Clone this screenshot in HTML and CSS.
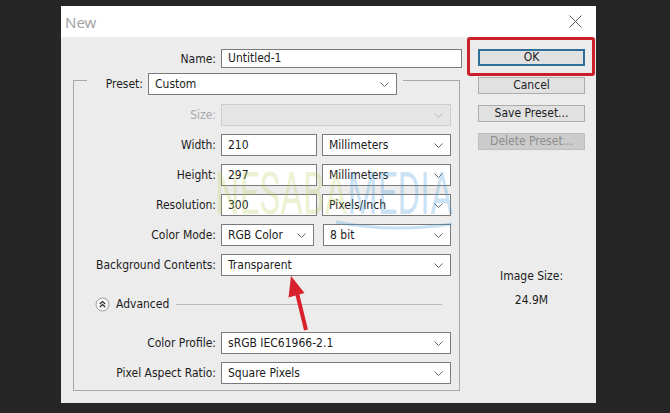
FILE: index.html
```html
<!DOCTYPE html>
<html lang="en">

<head>
    <meta charset="UTF-8">
    <meta name="viewport" content="width=device-width, initial-scale=1.0">
    <title>New</title>
    <link rel="stylesheet" href="styles.css">
</head>

<body>
    <!-- New document dialog -->
    <div class="dialog">
        <div class="titlebar">
            <span class="title">New</span>
            <svg class="close" viewBox="0 0 13 13" width="13" height="13">
                <path d="M0.5 0.5 L12.5 12.5 M12.5 0.5 L0.5 12.5" />
            </svg>
        </div>

        <div class="dialog-body">
            <!-- Left side: form -->
            <div class="main">
                <div class="name-row">
                    <label class="label name-label">Name:</label>
                    <div class="field name-field">Untitled-1</div>
                </div>

                <div class="group">
                    <div class="legend">
                        <label class="label preset-label">Preset:</label>
                        <div class="select preset-select">
                            <span>Custom</span>
                            <svg class="chev" viewBox="0 0 9 5" width="9" height="5"><path d="M0.5 0.5 L4.5 4.5 L8.5 0.5" /></svg>
                        </div>
                    </div>

                    <div class="rows top-rows">
                        <div class="row">
                            <label class="label disabled-label">Size:</label>
                            <div class="select disabled-select">
                                <span></span>
                                <svg class="chev" viewBox="0 0 9 5" width="9" height="5"><path d="M0.5 0.5 L4.5 4.5 L8.5 0.5" /></svg>
                            </div>
                        </div>
                        <div class="row">
                            <label class="label">Width:</label>
                            <div class="pair">
                                <div class="field num-field">210</div>
                                <div class="select unit-select">
                                    <span>Millimeters</span>
                                    <svg class="chev" viewBox="0 0 9 5" width="9" height="5"><path d="M0.5 0.5 L4.5 4.5 L8.5 0.5" /></svg>
                                </div>
                            </div>
                        </div>
                        <div class="row">
                            <label class="label">Height:</label>
                            <div class="pair">
                                <div class="field num-field">297</div>
                                <div class="select unit-select">
                                    <span>Millimeters</span>
                                    <svg class="chev" viewBox="0 0 9 5" width="9" height="5"><path d="M0.5 0.5 L4.5 4.5 L8.5 0.5" /></svg>
                                </div>
                            </div>
                        </div>
                        <div class="row">
                            <label class="label">Resolution:</label>
                            <div class="pair">
                                <div class="field num-field">300</div>
                                <div class="select unit-select">
                                    <span>Pixels/Inch</span>
                                    <svg class="chev" viewBox="0 0 9 5" width="9" height="5"><path d="M0.5 0.5 L4.5 4.5 L8.5 0.5" /></svg>
                                </div>
                            </div>
                        </div>
                        <div class="row">
                            <label class="label">Color Mode:</label>
                            <div class="pair mode-pair">
                                <div class="select mode-select">
                                    <span>RGB Color</span>
                                    <svg class="chev" viewBox="0 0 9 5" width="9" height="5"><path d="M0.5 0.5 L4.5 4.5 L8.5 0.5" /></svg>
                                </div>
                                <div class="select bit-select">
                                    <span>8 bit</span>
                                    <svg class="chev" viewBox="0 0 9 5" width="9" height="5"><path d="M0.5 0.5 L4.5 4.5 L8.5 0.5" /></svg>
                                </div>
                            </div>
                        </div>
                        <div class="row">
                            <label class="label">Background Contents:</label>
                            <div class="select">
                                <span>Transparent</span>
                                <svg class="chev" viewBox="0 0 9 5" width="9" height="5"><path d="M0.5 0.5 L4.5 4.5 L8.5 0.5" /></svg>
                            </div>
                        </div>
                    </div>

                    <!-- Advanced toggle -->
                    <div class="advanced">
                        <svg class="adv-icon" viewBox="0 0 15 15" width="15" height="15">
                            <circle cx="7.5" cy="7.5" r="6.5" />
                            <path d="M4.8 7 L7.5 4.6 L10.2 7 M4.8 10 L7.5 7.6 L10.2 10" />
                        </svg>
                        <span class="adv-text">Advanced</span>
                        <span class="adv-line"></span>
                    </div>

                    <div class="rows bottom-rows">
                        <div class="row">
                            <label class="label">Color Profile:</label>
                            <div class="select">
                                <span>sRGB IEC61966-2.1</span>
                                <svg class="chev" viewBox="0 0 9 5" width="9" height="5"><path d="M0.5 0.5 L4.5 4.5 L8.5 0.5" /></svg>
                            </div>
                        </div>
                        <div class="row">
                            <label class="label">Pixel Aspect Ratio:</label>
                            <div class="select">
                                <span>Square Pixels</span>
                                <svg class="chev" viewBox="0 0 9 5" width="9" height="5"><path d="M0.5 0.5 L4.5 4.5 L8.5 0.5" /></svg>
                            </div>
                        </div>
                    </div>
                </div>
            </div>

            <!-- Right side: buttons -->
            <div class="side">
                <div class="btn ok-btn">OK</div>
                <div class="btn">Cancel</div>
                <div class="btn">Save Preset...</div>
                <div class="btn disabled-btn">Delete Preset...</div>
                <div class="image-size">
                    <div>Image Size:</div>
                    <div>24.9M</div>
                </div>
                <div class="highlight"></div>
            </div>
        </div>
    </div>

    <!-- Watermark over the dialog -->
    <div class="watermark"><span class="wm-green">NESABA</span><span class="wm-blue">MEDIA</span></div>
    <svg class="swoosh" viewBox="0 0 670 413" width="670" height="413">
        <path d="M336 222 Q392 233 452 224" />
    </svg>

    <!-- Red pointer arrow -->
    <svg class="arrow" viewBox="0 0 670 413" width="670" height="413">
        <line x1="306" y1="330" x2="297" y2="293" />
        <polygon points="291,276 304.5,293 288.5,297.5" />
    </svg>
</body>

</html>
```

FILE: styles.css
```css
body {
    margin: 0;
    width: 670px;
    height: 413px;
    overflow: hidden;
    position: relative;
    background-color: #262626;
    font-family: "DejaVu Sans Condensed", "DejaVu Sans", sans-serif;
    font-size: 12px;
    color: #1c1c1c;
}

/* Dialog window */
.dialog {
    margin: 6px 0 0 61px;
    width: 535px;
    height: 397px;
    background-color: #ececec;
    display: flex;
    flex-direction: column;
}

.titlebar {
    height: 31px;
    background-color: #fff;
    display: flex;
    align-items: center;
    justify-content: space-between;
    padding: 0 14px 0 4px;
}

.title {
    font-family: "Noto Sans", sans-serif;
    font-size: 15px;
    color: #a3a3a3;
}

.close path {
    stroke: #5a5a5a;
    stroke-width: 1;
    fill: none;
}

.dialog-body {
    display: flex;
    padding-top: 12px;
}

/* Form column */
.main {
    padding-left: 12px;
    width: 389px;
}

.label {
    text-align: right;
    white-space: nowrap;
}

.name-row {
    display: flex;
    align-items: center;
    gap: 5px;
}

.name-label {
    width: 143px;
}

.field,
.select {
    box-sizing: border-box;
    height: 22px;
    border: 1px solid #7a7a7a;
    background-color: #fff;
    padding-left: 6px;
    line-height: 20px;
    white-space: nowrap;
}

.name-field {
    width: 241px;
    height: 19px;
    line-height: 17px;
}

.select {
    display: flex;
    align-items: center;
    justify-content: space-between;
    padding-right: 7px;
}

.chev path {
    stroke: #666;
    stroke-width: 1;
    fill: none;
}

/* Group box with preset legend */
.group {
    box-sizing: border-box;
    width: 387px;
    margin-top: 12px;
    border: 1px solid #a8a8a8;
    padding-bottom: 6px;
}

.legend {
    display: flex;
    align-items: center;
    gap: 5px;
    width: fit-content;
    margin: -8px 0 0 13px;
    padding: 0 6px 0 4px;
    background-color: #ececec;
}

.preset-label {
    width: 52px;
}

.preset-select {
    width: 249px;
}

.rows {
    display: flex;
    flex-direction: column;
    gap: 8px;
}

.top-rows {
    margin-top: 9px;
}

.bottom-rows {
    margin-top: 17px;
}

.row {
    display: grid;
    grid-template-columns: 142px 230px;
    column-gap: 5px;
    align-items: center;
}

.disabled-label {
    color: #a9a9a9;
}

.disabled-select {
    background-color: #e5e5e5;
    border-color: #cdcdcd;
}

.disabled-select .chev path {
    stroke: #b4b4b4;
}

.pair {
    display: flex;
    gap: 5px;
}

.num-field {
    width: 96px;
}

.unit-select {
    width: 129px;
}

.mode-pair {
    gap: 9px;
}

.mode-select {
    width: 93px;
}

.bit-select {
    width: 128px;
}

/* Advanced toggle */
.advanced {
    display: flex;
    align-items: center;
    height: 22px;
    margin-top: 17px;
    padding: 0 17px 0 21px;
}

.adv-icon circle {
    fill: #f7f7f7;
    stroke: #a0a0a0;
}

.adv-icon path {
    fill: none;
    stroke: #2a2a2a;
    stroke-width: 1.2;
}

.adv-text {
    margin-left: 6px;
}

.adv-line {
    flex: 1;
    height: 1px;
    margin-left: 7px;
    background-color: #b9b9b9;
}

/* Button column */
.side {
    position: relative;
    margin-left: 16px;
    width: 107px;
    display: flex;
    flex-direction: column;
    gap: 11px;
}

.btn {
    box-sizing: border-box;
    height: 17px;
    border: 1px solid #adadad;
    background-color: #e1e1e1;
    text-align: center;
    line-height: 15px;
}

.ok-btn {
    border: 2px solid #2f6f99;
    line-height: 13px;
}

.disabled-btn {
    background-color: #cccccc;
    border-color: #bfbfbf;
    color: #8d8d8d;
}

.image-size {
    margin-top: 103px;
    text-align: center;
    line-height: 24px;
}

.highlight {
    position: absolute;
    left: -11px;
    top: -12px;
    width: 128px;
    height: 39px;
    box-sizing: border-box;
    border: 3px solid #c9202b;
    border-radius: 3px;
}

/* Watermark */
.watermark {
    position: absolute;
    left: 215px;
    top: 164px;
    font-family: Roboto, sans-serif;
    font-size: 60px;
    line-height: 60px;
    white-space: nowrap;
    transform: scaleX(0.58);
    transform-origin: left top;
}

.wm-green {
    color: rgba(176, 204, 80, 0.26);
}

.wm-blue {
    color: rgba(70, 155, 215, 0.28);
}

.swoosh {
    position: absolute;
    left: 0;
    top: 0;
}

.swoosh path {
    fill: none;
    stroke: rgba(70, 155, 215, 0.3);
    stroke-width: 3;
}

/* Red arrow */
.arrow {
    position: absolute;
    left: 0;
    top: 0;
}

.arrow line {
    stroke: #d8212c;
    stroke-width: 4;
}

.arrow polygon {
    fill: #d8212c;
}
```
